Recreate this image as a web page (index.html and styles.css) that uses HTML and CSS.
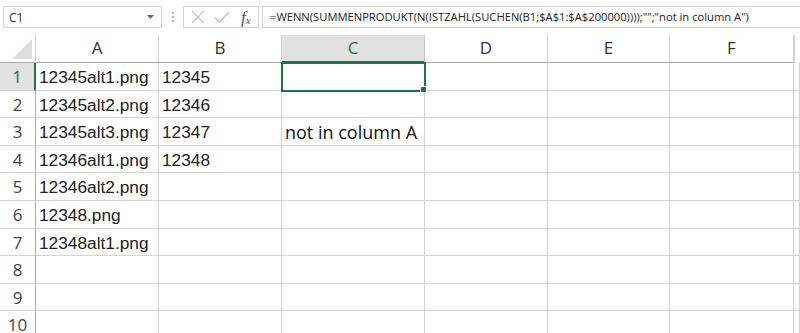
FILE: index.html
```html
<!DOCTYPE html>
<html lang="en">
<head>
    <meta charset="UTF-8">
    <title>Sheet</title>
    <link rel="stylesheet" href="styles.css">
</head>
<body>
    <div class="formula-bar">
        <div class="name-box">
            <span>C1</span>
            <svg class="caret" width="7" height="4" viewBox="0 0 7 4"><path d="M0 0h7L3.5 4z" fill="#666"/></svg>
        </div>
        <div class="grip"><i></i><i></i><i></i></div>
        <div class="fx-buttons">
            <svg width="14" height="14" viewBox="0 0 14 14"><path d="M1 1L13 13M13 1L1 13" stroke="#c6c6c6" stroke-width="1.3" fill="none"/></svg>
            <svg width="16" height="14" viewBox="0 0 16 14"><path d="M1 7.5L5.5 12L15 2" stroke="#c6c6c6" stroke-width="1.6" fill="none"/></svg>
            <span class="fx">f<sub>x</sub></span>
        </div>
        <div class="formula">=WENN(SUMMENPRODUKT(N(ISTZAHL(SUCHEN(B1;$A$1:$A$200000))));"";"not in column A")</div>
    </div>

    <div class="sheet">
        <div class="corner"><span class="tri"></span></div>
        <div class="col-head">A</div>
        <div class="col-head">B</div>
        <div class="col-head sel">C</div>
        <div class="col-head">D</div>
        <div class="col-head">E</div>
        <div class="col-head">F</div>
        <div class="col-head last"></div>

        <div class="row-head sel">1</div>
        <div class="cell">12345alt1.png</div>
        <div class="cell">12345</div>
        <div class="cell active"><span class="handle"></span></div>
        <div class="cell"></div><div class="cell"></div><div class="cell"></div><div class="cell"></div>

        <div class="row-head">2</div>
        <div class="cell">12345alt2.png</div>
        <div class="cell">12346</div>
        <div class="cell"></div><div class="cell"></div><div class="cell"></div><div class="cell"></div><div class="cell"></div>

        <div class="row-head">3</div>
        <div class="cell">12345alt3.png</div>
        <div class="cell">12347</div>
        <div class="cell result">not in column A</div>
        <div class="cell"></div><div class="cell"></div><div class="cell"></div><div class="cell"></div>

        <div class="row-head">4</div>
        <div class="cell">12346alt1.png</div>
        <div class="cell">12348</div>
        <div class="cell"></div><div class="cell"></div><div class="cell"></div><div class="cell"></div><div class="cell"></div>

        <div class="row-head">5</div>
        <div class="cell">12346alt2.png</div>
        <div class="cell"></div><div class="cell"></div><div class="cell"></div><div class="cell"></div><div class="cell"></div><div class="cell"></div>

        <div class="row-head">6</div>
        <div class="cell">12348.png</div>
        <div class="cell"></div><div class="cell"></div><div class="cell"></div><div class="cell"></div><div class="cell"></div><div class="cell"></div>

        <div class="row-head">7</div>
        <div class="cell">12348alt1.png</div>
        <div class="cell"></div><div class="cell"></div><div class="cell"></div><div class="cell"></div><div class="cell"></div><div class="cell"></div>

        <div class="row-head">8</div>
        <div class="cell"></div><div class="cell"></div><div class="cell"></div><div class="cell"></div><div class="cell"></div><div class="cell"></div><div class="cell"></div>

        <div class="row-head">9</div>
        <div class="cell"></div><div class="cell"></div><div class="cell"></div><div class="cell"></div><div class="cell"></div><div class="cell"></div><div class="cell"></div>

        <div class="row-head">10</div>
        <div class="cell"></div><div class="cell"></div><div class="cell"></div><div class="cell"></div><div class="cell"></div><div class="cell"></div><div class="cell"></div>
    </div>
</body>
</html>
```

FILE: styles.css
```css
body {
    margin: 0;
    background: #fff;
    font-family: "Open Sans", "Noto Sans", sans-serif;
    color: #222;
    overflow: hidden;
}
.formula-bar {
    display: flex;
    align-items: center;
    height: 22px;
    padding: 6px 0 6px 3px;
}
.name-box {
    width: 159px;
    height: 22px;
    border: 1px solid #d4d4d4;
    display: flex;
    align-items: center;
    justify-content: space-between;
    padding: 0 7px 0 5px;
    box-sizing: border-box;
    font-size: 12px;
    color: #333;
}
.grip {
    width: 20px;
    display: flex;
    flex-direction: column;
    align-items: center;
    gap: 2px;
    margin-left: 1px;
}
.grip i {
    width: 2px;
    height: 2px;
    background: #b5b5b5;
}
.fx-buttons {
    width: 76px;
    height: 22px;
    box-sizing: border-box;
    border: 1px solid #d4d4d4;
    display: flex;
    align-items: center;
    gap: 9px;
    padding-left: 7px;
}
.fx {
    font-family: "Liberation Serif", serif;
    font-style: italic;
    font-size: 17px;
    color: #555;
    line-height: 1;
    margin-left: 2px;
}
.fx sub {
    font-size: 11px;
    vertical-align: -1px;
}
.formula {
    flex: 1;
    height: 22px;
    box-sizing: border-box;
    border: 1px solid #d4d4d4;
    border-right: none;
    margin-left: 3px;
    padding-left: 7px;
    font-size: 11.2px;
    line-height: 20px;
    color: #222;
    white-space: nowrap;
}
.sheet {
    display: grid;
    grid-template-columns: 36px 123px 123px 143px 123px 122px 124px 1fr;
    grid-template-rows: 28px;
    grid-auto-rows: 27.6px;
    margin-top: 1px;
}
.corner {
    position: relative;
    border-right: 1px solid #d4d4d4;
    border-bottom: 1px solid #ababab;
}
.tri {
    position: absolute;
    right: 3px;
    bottom: 3px;
    width: 0;
    height: 0;
    border-left: 20px solid transparent;
    border-bottom: 20px solid #dfdfdf;
}
.col-head {
    border-right: 1px solid #d4d4d4;
    border-bottom: 1px solid #ababab;
    font-size: 17px;
    color: #333;
    text-align: center;
    line-height: 26px;
}
.col-head.last {
    margin-right: 5px;
}
.col-head.sel {
    background: #e1e1e1;
    color: #217346;
    border-bottom: 2px solid #217346;
    border-right-color: #c6c6c6;
}
.row-head {
    border-right: 1px solid #ababab;
    border-bottom: 1px solid #d4d4d4;
    font-size: 17px;
    color: #444;
    text-align: center;
    line-height: 27px;
}
.row-head.sel {
    background: #e1e1e1;
    color: #217346;
    border-right: 2px solid #217346;
}
.cell {
    border-right: 1px solid #d4d4d4;
    border-bottom: 1px solid #d4d4d4;
    font-family: "Liberation Sans", Arial, sans-serif;
    font-size: 17.3px;
    line-height: 28px;
    padding-left: 3px;
    color: #222;
    white-space: nowrap;
}
.cell.result {
    font-family: "Open Sans", sans-serif;
    font-size: 18px;
    color: #111;
}
.cell.active {
    position: relative;
    outline: 2px solid #217346;
    outline-offset: -1px;
    z-index: 1;
}
.handle {
    position: absolute;
    right: -3px;
    bottom: -3px;
    width: 5px;
    height: 5px;
    background: #217346;
    border: 1px solid #fff;
}
```
